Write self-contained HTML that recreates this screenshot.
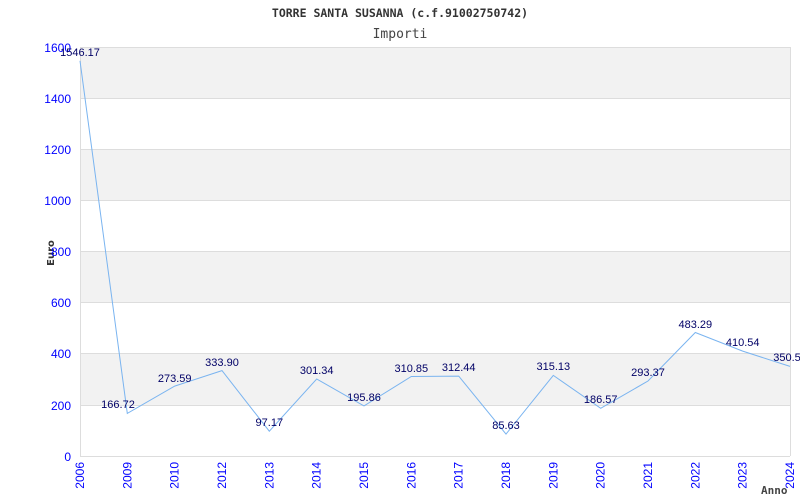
<!DOCTYPE html>
<html><head><style>html,body{margin:0;padding:0;background:#fff;width:800px;height:500px;overflow:hidden}</style></head>
<body>
<svg width="800" height="500" xmlns="http://www.w3.org/2000/svg" font-family="Liberation Sans, sans-serif">
<rect width="800" height="500" fill="#fff"/>
<g fill="#f2f2f2">
<rect x="80" y="47" width="710" height="51.1"/>
<rect x="80" y="149.3" width="710" height="51.1"/>
<rect x="80" y="251.5" width="710" height="51.1"/>
<rect x="80" y="353.8" width="710" height="51.1"/>
</g>
<g stroke="#dddddd" stroke-width="1">
<line x1="80" y1="47.5" x2="790" y2="47.5"/>
<line x1="80" y1="98.5" x2="790" y2="98.5"/>
<line x1="80" y1="149.5" x2="790" y2="149.5"/>
<line x1="80" y1="200.5" x2="790" y2="200.5"/>
<line x1="80" y1="251.5" x2="790" y2="251.5"/>
<line x1="80" y1="302.5" x2="790" y2="302.5"/>
<line x1="80" y1="353.5" x2="790" y2="353.5"/>
<line x1="80" y1="405.5" x2="790" y2="405.5"/>
<line x1="80" y1="456.5" x2="790" y2="456.5"/>
<line x1="80.5" y1="47" x2="80.5" y2="456"/>
<line x1="790.5" y1="47" x2="790.5" y2="456"/>
</g>
<text x="400" y="17" text-anchor="middle" font-family="DejaVu Sans Mono, monospace" font-weight="bold" font-size="11.5" fill="#333">TORRE SANTA SUSANNA (c.f.91002750742)</text>
<text x="400" y="38" text-anchor="middle" font-family="DejaVu Sans Mono, monospace" font-size="13" fill="#444">Importi</text>
<text transform="translate(54,253) rotate(-90)" text-anchor="middle" font-family="DejaVu Sans, sans-serif" font-weight="bold" font-size="10" fill="#333">Euro</text>
<text x="761" y="494" font-family="DejaVu Sans Mono, monospace" font-weight="bold" font-size="11" fill="#444">Anno</text>
<g fill="#0000ff" font-size="12" text-anchor="end">
<text x="71" y="52">1600</text><text x="71" y="103">1400</text><text x="71" y="154">1200</text><text x="71" y="205">1000</text><text x="71" y="256">800</text><text x="71" y="307">600</text><text x="71" y="358">400</text><text x="71" y="410">200</text><text x="71" y="461">0</text>
</g>
<g fill="#0000ff" font-size="12" text-anchor="end">
<text transform="translate(84,462) rotate(-90)">2006</text>
<text transform="translate(131.3,462) rotate(-90)">2009</text>
<text transform="translate(178.7,462) rotate(-90)">2010</text>
<text transform="translate(226,462) rotate(-90)">2012</text>
<text transform="translate(273.3,462) rotate(-90)">2013</text>
<text transform="translate(320.7,462) rotate(-90)">2014</text>
<text transform="translate(368,462) rotate(-90)">2015</text>
<text transform="translate(415.3,462) rotate(-90)">2016</text>
<text transform="translate(462.7,462) rotate(-90)">2017</text>
<text transform="translate(510,462) rotate(-90)">2018</text>
<text transform="translate(557.3,462) rotate(-90)">2019</text>
<text transform="translate(604.7,462) rotate(-90)">2020</text>
<text transform="translate(652,462) rotate(-90)">2021</text>
<text transform="translate(699.3,462) rotate(-90)">2022</text>
<text transform="translate(746.7,462) rotate(-90)">2023</text>
<text transform="translate(794,462) rotate(-90)">2024</text>
</g>
<polyline fill="none" stroke="#7ab4f0" stroke-width="1" points="80,60.8 127.3,413.4 174.7,386.1 222,370.6 269.3,431.2 316.7,379 364,405.9 411.3,376.5 458.7,376.1 506,434.1 553.3,375.4 600.7,408.3 648,381 695.3,332.5 742.7,351.1 790,366.4"/>
<g fill="#000066" font-size="11" text-anchor="middle">
<text x="80" y="56">1546.17</text>
<text x="118" y="408">166.72</text>
<text x="174.7" y="382">273.59</text>
<text x="222" y="366">333.90</text>
<text x="269.3" y="426">97.17</text>
<text x="316.7" y="374">301.34</text>
<text x="364" y="401">195.86</text>
<text x="411.3" y="372">310.85</text>
<text x="458.7" y="371">312.44</text>
<text x="506" y="429">85.63</text>
<text x="553.3" y="370">315.13</text>
<text x="600.7" y="403">186.57</text>
<text x="648" y="376">293.37</text>
<text x="695.3" y="328">483.29</text>
<text x="742.7" y="346">410.54</text>
<text x="787" y="361">350.5</text>
</g>
</svg>
</body></html>
